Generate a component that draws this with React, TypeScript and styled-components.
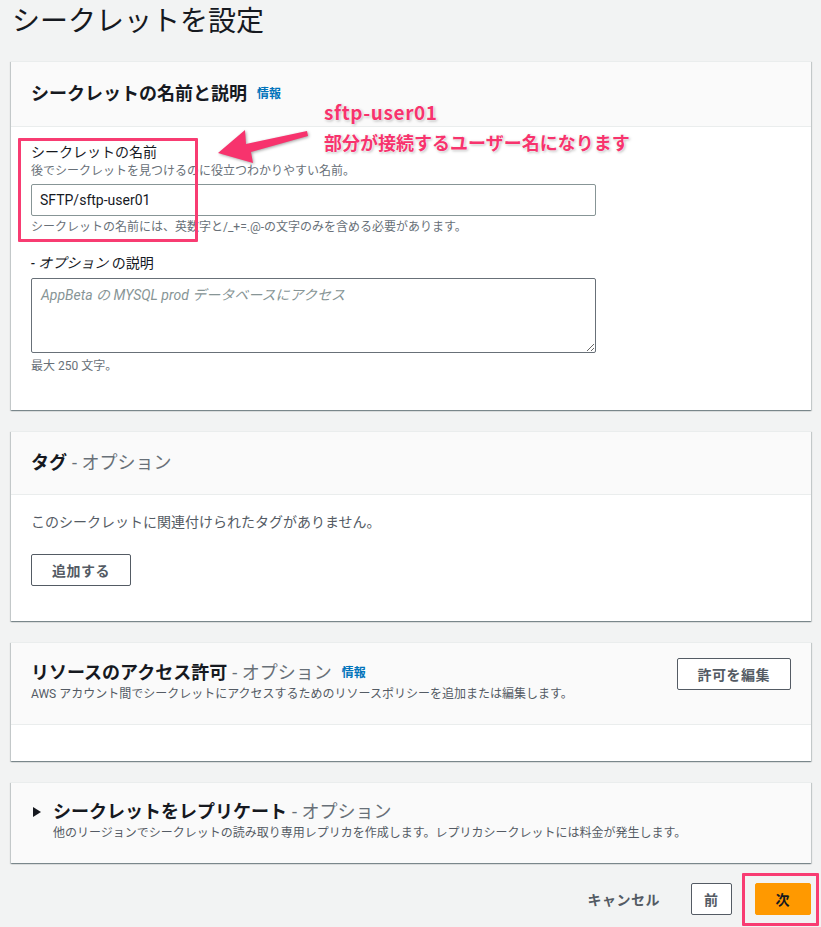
import React from "react";
import styled, { createGlobalStyle } from "styled-components";

const GlobalStyle = createGlobalStyle`
  html, body {
    margin: 0;
    padding: 0;
    background: #f2f3f3;
  }
  body {
    font-family: Roboto, "Noto Sans CJK JP", sans-serif;
    color: #16191f;
    -webkit-font-smoothing: antialiased;
  }
  * {
    box-sizing: border-box;
  }
`;

const Page = styled.div`
  position: relative;
  width: 821px;
  height: 927px;
  padding: 0 10px 0 11px;
  overflow: hidden;
`;

const PageTitle = styled.h1`
  margin: 0 0 19px 1px;
  padding-top: 2px;
  font-size: 28px;
  line-height: 40px;
  font-weight: 400;
  color: #16191f;
`;

const Panel = styled.section`
  background: #fff;
  margin-bottom: 21px;
  box-shadow: 0 1px 1px 0 rgba(0, 28, 36, 0.3),
    1px 1px 1px 0 rgba(0, 28, 36, 0.15),
    -1px 1px 1px 0 rgba(0, 28, 36, 0.15);
  border-top: 1px solid #eaeded;
`;

const PanelHeader = styled.div<{ $pad?: string; $flat?: boolean }>`
  display: flex;
  justify-content: space-between;
  align-items: flex-start;
  background: #fafafa;
  padding: ${(p) => p.$pad || "18px 20px"};
  border-bottom: ${(p) => (p.$flat ? "none" : "1px solid #eaeded")};
`;

const HeaderText = styled.div<{ $top?: number }>`
  padding-top: ${(p) => p.$top || 0}px;
`;

const Heading = styled.h2`
  display: flex;
  align-items: center;
  margin: 0;
  font-size: 18px;
  line-height: 26px;
  font-weight: 700;
  color: #16191f;
`;

const Optional = styled.span`
  font-weight: 400;
  color: #687078;
  margin-left: 5px;
`;

const InfoLink = styled.a`
  font-size: 12px;
  font-weight: 700;
  color: #0073bb;
  margin-left: 10px;
  text-decoration: none;
`;

const HeaderDesc = styled.p<{ $indent?: number }>`
  margin: 0;
  padding-left: ${(p) => p.$indent || 0}px;
  font-size: 12px;
  line-height: 16px;
  color: #545b64;
`;

const Caret = styled.svg`
  margin: 0 12px 0 2px;
`;

const PanelBody = styled.div<{ $pad: string; $h?: number }>`
  padding: ${(p) => p.$pad};
  ${(p) => (p.$h ? `height: ${p.$h}px;` : "")}
`;

const FieldLabel = styled.label`
  display: block;
  font-size: 14px;
  line-height: 22px;
  color: #16191f;
`;

const OptionalLabel = styled.i`
  font-style: italic;
`;

const FieldHint = styled.div<{ $mt?: number }>`
  margin-top: ${(p) => p.$mt || 0}px;
  font-size: 12px;
  line-height: 16px;
  color: #687078;
`;

const TextInput = styled.input`
  display: block;
  width: 565px;
  height: 32px;
  margin-top: 5px;
  padding: 0 8px;
  border: 1px solid #879596;
  border-radius: 2px;
  font-family: Roboto, "Noto Sans CJK JP", sans-serif;
  font-size: 14px;
  color: #16191f;
  background: #fff;
`;

const TextArea = styled.textarea`
  display: block;
  width: 565px;
  height: 75px;
  margin-top: 4px;
  padding: 5px 9px;
  border: 1px solid #687078;
  border-radius: 2px;
  font-family: Roboto, "Noto Sans CJK JP", sans-serif;
  font-size: 14px;
  line-height: 22px;
  resize: vertical;
  &::placeholder {
    color: #879596;
    font-style: italic;
  }
`;

const Spacer = styled.div<{ $h: number }>`
  height: ${(p) => p.$h}px;
`;

const BodyText = styled.p`
  margin: 0;
  font-size: 14px;
  line-height: 20px;
  color: #545b64;
`;

const Button = styled.button<{ $primary?: boolean; $pad?: number }>`
  height: 32px;
  padding: 0 ${(p) => p.$pad ?? 20}px;
  border-radius: 2px;
  border: 1px solid ${(p) => (p.$primary ? "#ff9900" : "#545b64")};
  background: ${(p) => (p.$primary ? "#ff9900" : "#fff")};
  color: ${(p) => (p.$primary ? "#16191f" : "#545b64")};
  font-family: Roboto, "Noto Sans CJK JP", sans-serif;
  font-size: 14px;
  font-weight: 700;
  letter-spacing: 0.5px;
  cursor: pointer;
`;

const TextButton = styled.button`
  height: 32px;
  padding: 0;
  margin-right: 31px;
  border: none;
  background: transparent;
  color: #545b64;
  font-family: Roboto, "Noto Sans CJK JP", sans-serif;
  font-size: 14px;
  font-weight: 700;
  letter-spacing: 0.5px;
`;

const Footer = styled.div`
  display: flex;
  justify-content: flex-end;
  align-items: center;
  gap: 23px;
  margin-top: -1px;
`;

/* annotation overlay */
const Mark = styled.div<{ $x: number; $y: number; $w: number; $h: number }>`
  position: absolute;
  left: ${(p) => p.$x}px;
  top: ${(p) => p.$y}px;
  width: ${(p) => p.$w}px;
  height: ${(p) => p.$h}px;
  border: 3px solid #f83c72;
  border-radius: 1px;
  pointer-events: none;
`;

const Note = styled.div`
  position: absolute;
  left: 324px;
  top: 97px;
  font-family: "Noto Sans CJK JP", sans-serif;
  font-weight: 700;
  font-size: 18px;
  line-height: 30px;
  color: #f7336d;
  text-shadow: 0 0 2px #fff, 0 0 2px #fff, 1px 1px 3px rgba(0, 0, 0, 0.35);
`;

const NoteLatin = styled.span`
  font-size: 19px;
  letter-spacing: 0.6px;
`;

const Arrow = styled.svg`
  position: absolute;
  left: 210px;
  top: 124px;
  filter: drop-shadow(1px 1px 1.5px rgba(0, 0, 0, 0.35));
`;

export default function App() {
  return (
    <Page>
      <GlobalStyle />
      <PageTitle>シークレットを設定</PageTitle>

      <Panel>
        <PanelHeader $pad="19px 20px">
          <Heading>
            シークレットの名前と説明<InfoLink>情報</InfoLink>
          </Heading>
        </PanelHeader>
        <PanelBody $pad="14px 20px 36px">
          <FieldLabel>シークレットの名前</FieldLabel>
          <FieldHint>後でシークレットを見つけるのに役立つわかりやすい名前。</FieldHint>
          <TextInput defaultValue="SFTP/sftp-user01" />
          <FieldHint $mt={3}>
            シークレットの名前には、英数字と/_+=.@-の文字のみを含める必要があります。
          </FieldHint>
          <Spacer $h={17} />
          <FieldLabel>
            <OptionalLabel>- オプション</OptionalLabel> の説明
          </FieldLabel>
          <TextArea placeholder="AppBeta の MYSQL prod データベースにアクセス" />
          <FieldHint $mt={5}>最大 250 文字。</FieldHint>
        </PanelBody>
      </Panel>

      <Panel>
        <PanelHeader>
          <Heading>
            タグ<Optional>- オプション</Optional>
          </Heading>
        </PanelHeader>
        <PanelBody $pad="17px 20px 35px">
          <BodyText>このシークレットに関連付けられたタグがありません。</BodyText>
          <Spacer $h={22} />
          <Button>追加する</Button>
        </PanelBody>
      </Panel>

      <Panel>
        <PanelHeader $pad="15px 20px 22px">
          <HeaderText $top={2}>
            <Heading>
              リソースのアクセス許可<Optional>- オプション</Optional>
              <InfoLink>情報</InfoLink>
            </Heading>
            <HeaderDesc>
              AWS アカウント間でシークレットにアクセスするためのリソースポリシーを追加または編集します。
            </HeaderDesc>
          </HeaderText>
          <Button>許可を編集</Button>
        </PanelHeader>
        <PanelBody $pad="0" $h={36} />
      </Panel>

      <Panel>
        <PanelHeader $pad="16px 20px 22px" $flat>
          <HeaderText>
            <Heading>
              <Caret width="8" height="10" viewBox="0 0 8 10">
                <polygon points="0,0 8,5 0,10" fill="#16191f" />
              </Caret>
              シークレットをレプリケート<Optional>- オプション</Optional>
            </Heading>
            <HeaderDesc $indent={22}>
              他のリージョンでシークレットの読み取り専用レプリカを作成します。レプリカシークレットには料金が発生します。
            </HeaderDesc>
          </HeaderText>
        </PanelHeader>
      </Panel>

      <Footer>
        <TextButton style={{ marginRight: 8 }}>キャンセル</TextButton>
        <Button $pad={12}>前</Button>
        <Button $primary>次</Button>
      </Footer>

      <Mark $x={18} $y={138} $w={180} $h={104} />
      <Mark $x={742} $y={873} $w={77} $h={53} />

      <Arrow width="110" height="45" viewBox="0 0 110 45">
        <polygon
          points="8,29 35,6 36,20 97,7 98,12 41,28 43,39"
          fill="#f7336d"
        />
      </Arrow>
      <Note>
        <NoteLatin>sftp-user01</NoteLatin>
        <br />
        部分が接続するユーザー名になります
      </Note>
    </Page>
  );
}
